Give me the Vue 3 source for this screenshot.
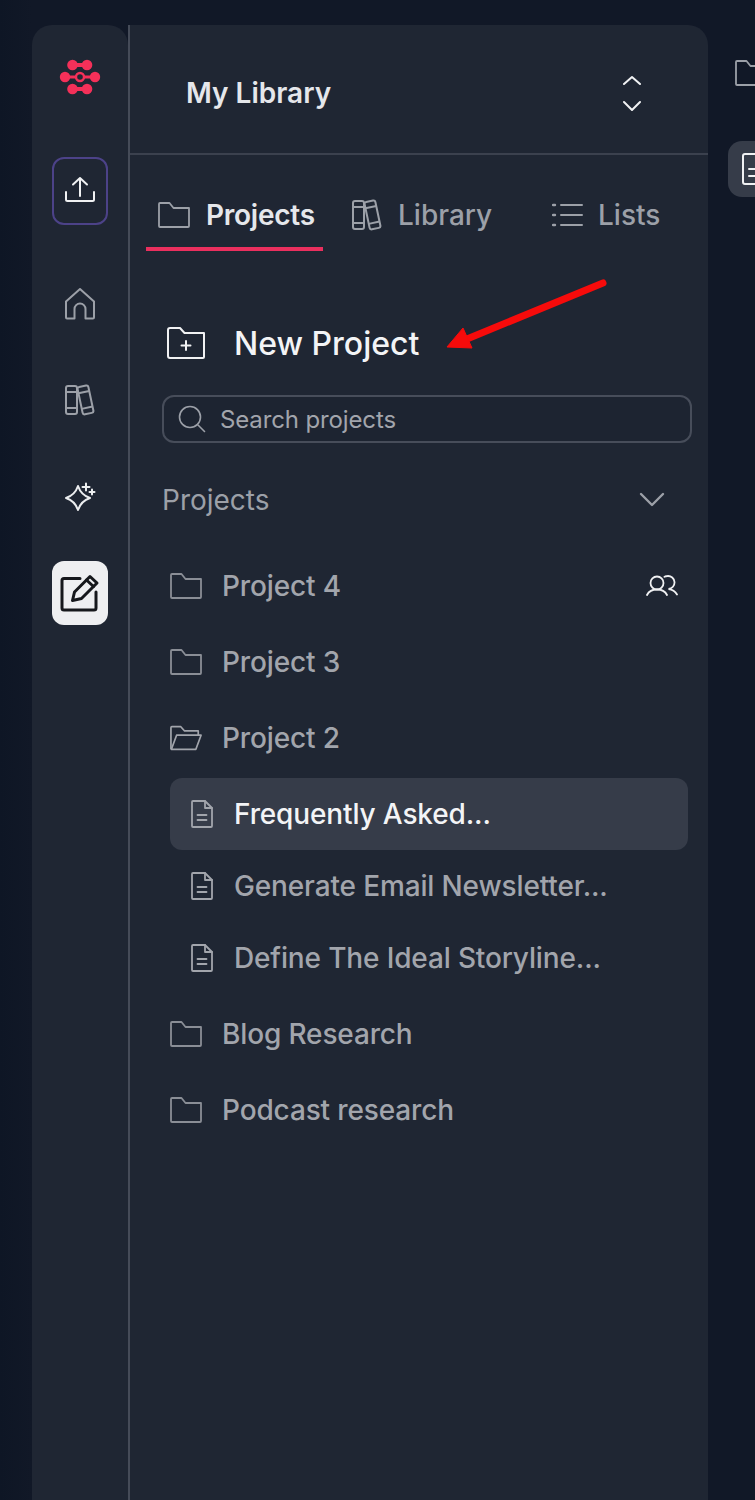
<template>
  <div class="page">
    <aside class="rail">
      <svg class="logo" width="42" height="36" viewBox="0 0 42 36">
        <g fill="#f43059">
          <circle cx="13.500" cy="6" r="5.300" /><circle cx="28" cy="6" r="5.300" />
          <path d="M13 4h15v4H13z" />
          <circle cx="6" cy="18" r="5.200" /><circle cx="36" cy="18" r="5.200" />
          <path d="M5 16.500h32v3H5z" />
          <circle cx="13.500" cy="30" r="5.300" /><circle cx="28" cy="30" r="5.300" />
          <path d="M13 28h15v4H13z" />
        </g>
        <circle cx="21" cy="18" r="4" fill="#1f2633" stroke="#f43059" stroke-width="2.400" />
      </svg>

      <button class="rail-btn upload">
        <svg width="32" height="32" viewBox="0 0 32 32" fill="none" stroke="#f0f1f3" stroke-width="2" stroke-linecap="round" stroke-linejoin="round">
          <path d="M16 21V3M9 9.500 16 3l7 6.500M2 17v7.500c0 1 .5 1.500 1.500 1.500h25c1 0 1.500-.5 1.500-1.500V17" />
        </svg>
      </button>

      <span class="rail-icon home">
        <svg width="32" height="32" viewBox="0 0 32 32" fill="none" stroke="#9ca0a8" stroke-width="2" stroke-linejoin="round">
          <path d="M2 13.500 16 1l14 12.500V29.500a1 1 0 0 1-1 1H21.500V21a5.500 5.500 0 0 0-11 0v9.500H3a1 1 0 0 1-1-1z" />
        </svg>
      </span>

      <span class="rail-icon books">
        <svg width="32" height="32" viewBox="0 0 32 32" fill="none" stroke="#9ca0a8" stroke-width="2" stroke-linejoin="round">
          <rect x="2" y="2" width="11" height="28" rx="2" />
          <path d="M2 8h11M2 24h11" />
          <g transform="rotate(-12 21 16)">
            <rect x="16" y="2" width="11" height="28" rx="2" />
            <path d="M16 8h11M16 24h11" />
          </g>
        </svg>
      </span>

      <span class="rail-icon sparkle">
        <svg width="32" height="32" viewBox="0 0 32 32" fill="none" stroke="#eceef0" stroke-width="2" stroke-linejoin="round" stroke-linecap="round">
          <path d="M14 6Q17 15 26 18 17 21 14 30 11 21 2 18 11 15 14 6z" />
          <path d="M22 3.500v7M18.500 7h7M28 9.500v5M25.500 12h5" />
        </svg>
      </span>

      <button class="rail-btn edit">
        <svg width="40" height="40" viewBox="0 0 40 40" fill="none" stroke="#16181c" stroke-width="3" stroke-linecap="round" stroke-linejoin="round">
          <path d="M20 5.500H4a2 2 0 0 0-2 2V35a2 2 0 0 0 2 2h30a2 2 0 0 0 2-2V19" />
          <path d="M12.500 27.500l2-8.500L30 3.500l7 6.500-15.500 15.500z" />
          <path d="M26.500 7l7 6.500" />
        </svg>
      </button>
    </aside>

    <main class="panel">
      <header class="panel-head">
        <span class="head-title">My Library</span>
        <svg class="updown" width="20" height="36" viewBox="0 0 20 36" fill="none" stroke="#f0f1f3" stroke-width="2" stroke-linecap="round" stroke-linejoin="round">
          <path d="M2 9l8-7 8 7M2 27l8 8 8-8" />
        </svg>
      </header>

      <nav class="tabs">
        <div class="tab active">
          <svg class="folder" width="32" height="26" viewBox="0 0 32 26" fill="none" stroke="#9ca0a8" stroke-width="1.800" stroke-linejoin="round">
            <path d="M1 2a1 1 0 0 1 1-1h9.500l4 5H31v18a1 1 0 0 1-1 1H2a1 1 0 0 1-1-1z" />
          </svg>
          <span>Projects</span>
        </div>
        <div class="tab library">
          <svg width="30" height="32" viewBox="0 0 30 32" fill="none" stroke="#9ca0a8" stroke-width="2" stroke-linejoin="round">
            <rect x="1" y="2" width="11" height="28" rx="2" />
            <path d="M1 8h11M1 24h11" />
            <g transform="rotate(-12 20 16)">
              <rect x="15" y="2" width="11" height="28" rx="2" />
              <path d="M15 8h11M15 24h11" />
            </g>
          </svg>
          <span>Library</span>
        </div>
        <div class="tab lists">
          <svg width="31" height="24" viewBox="0 0 31 24" fill="none" stroke="#9ca0a8" stroke-width="2" stroke-linecap="round">
            <path d="M9 2h21M9 12h21M9 22h21" />
            <path d="M1 2h2M1 12h2M1 22h2" stroke-width="2.400" />
          </svg>
          <span>Lists</span>
        </div>
      </nav>

      <div class="new-project">
        <svg width="38" height="32" viewBox="0 0 38 32" fill="none" stroke="#f0f1f3" stroke-width="2" stroke-linejoin="round" stroke-linecap="round">
          <path d="M1 3a2 2 0 0 1 2-2h10l4.500 5H37v24a1 1 0 0 1-1 1H3a2 2 0 0 1-2-2z" />
          <path d="M19 14v9M14.500 18.500h9" />
        </svg>
        <span>New Project</span>
      </div>

      <div class="search">
        <svg width="28" height="28" viewBox="0 0 28 28" fill="none" stroke="#9ca0a8" stroke-width="1.600" stroke-linecap="round">
          <circle cx="12" cy="12" r="10.500" />
          <path d="M20 20l6.500 6.500" />
        </svg>
        <span>Search projects</span>
      </div>

      <div class="section-head">
        <span>Projects</span>
        <svg width="26" height="16" viewBox="0 0 26 16" fill="none" stroke="#9ca0a8" stroke-width="2.400" stroke-linecap="round" stroke-linejoin="round">
          <path d="M2 2l11 11L24 2" />
        </svg>
      </div>

      <ul class="tree">
        <li v-for="item in items" :key="item.name">
          <div class="row">
            <svg v-if="!item.open" class="row-icon" width="32" height="26" viewBox="0 0 32 26" fill="none" stroke="#8a8e96" stroke-width="1.800" stroke-linejoin="round">
              <path d="M1 2a1 1 0 0 1 1-1h9.500l4 5H31v18a1 1 0 0 1-1 1H2a1 1 0 0 1-1-1z" />
            </svg>
            <svg v-else class="row-icon" width="34" height="26" viewBox="0 0 34 26" fill="none" stroke="#a2a5ac" stroke-width="1.800" stroke-linejoin="round">
              <path d="M1 25V2a1 1 0 0 1 1-1h9.500l4 4.500H30V10" />
              <path d="M1.500 25 7 10h26l-5.500 15z" />
            </svg>
            <span class="row-name">{{ item.name }}</span>
            <svg v-if="item.shared" class="shared" width="32" height="22" viewBox="0 0 32 22" fill="none" stroke="#f0f1f3" stroke-width="1.800" stroke-linecap="round">
              <circle cx="11" cy="8" r="6.500" />
              <path d="M1 20c2-4 5.500-5.500 10-5.500S19 16 21 20" />
              <path d="M18.500 1.800c1-.5 2-.8 3-.8a6.500 6.500 0 0 1 1 13c4 .5 6.500 2 8.500 5.500" />
            </svg>
          </div>
          <ul v-if="item.children" class="docs">
            <li v-for="child in item.children" :key="child.name" class="doc" :class="{ selected: child.selected }">
              <svg width="22" height="28" viewBox="0 0 22 28" fill="none" stroke="#a2a5ac" stroke-width="1.800" stroke-linejoin="round" stroke-linecap="round">
                <path d="M1 2a1 1 0 0 1 1-1h12l7 7v18a1 1 0 0 1-1 1H2a1 1 0 0 1-1-1z" />
                <path d="M14 1v7h7M6.500 15h9M6.500 20h9" />
              </svg>
              <span>{{ child.name }}</span>
            </li>
          </ul>
        </li>
      </ul>
    </main>

    <aside class="peek">
      <svg class="peek-folder" width="27" height="26" viewBox="0 0 27 26" fill="none" stroke="#9ca0a8" stroke-width="1.800" stroke-linejoin="round">
        <path d="M28 25H2a1 1 0 0 1-1-1V2a1 1 0 0 1 1-1h9.500l4 5H28" />
      </svg>
      <div class="peek-active">
        <svg width="22" height="32" viewBox="0 0 22 32" fill="none" stroke="#f0f1f3" stroke-width="2" stroke-linecap="round">
          <path d="M24 1H3a2 2 0 0 0-2 2v26a2 2 0 0 0 2 2h21" />
          <path d="M7 16h16M7 23h16" />
        </svg>
      </div>
    </aside>

    <svg class="arrow" width="170" height="80" viewBox="0 0 170 80">
      <path d="M158 4 22 60" stroke="#f60b0b" stroke-width="7" stroke-linecap="round" />
      <path d="M2 68 18 49 27 69z" fill="#f60b0b" stroke="#f60b0b" stroke-width="1" stroke-linejoin="round" />
    </svg>
  </div>
</template>

<script setup>
const items = [
  { name: 'Project 4', shared: true },
  { name: 'Project 3' },
  {
    name: 'Project 2',
    open: true,
    children: [
      { name: 'Frequently Asked...', selected: true },
      { name: 'Generate Email Newsletter...' },
      { name: 'Define The Ideal Storyline...' },
    ],
  },
  { name: 'Blog Research' },
  { name: 'Podcast research' },
]
</script>

<style>
html,
body {
  background: #111827;
}
</style>

<style scoped>
.page {
  position: relative;
  display: flex;
  width: 755px;
  height: 1500px;
  overflow: hidden;
  box-sizing: border-box;
  padding: 25px 0 0 32px;
  background: linear-gradient(90deg, #0e1625 0, #111827 32px);
  font-family: Inter, "Liberation Sans", sans-serif;
  color: #e5e7eb;
}

.rail {
  flex: none;
  display: flex;
  flex-direction: column;
  align-items: center;
  width: 96px;
  background: #1f2633;
  border-radius: 20px 20px 0 0;
}

.logo {
  margin-top: 34px;
}

.rail-btn {
  display: flex;
  align-items: center;
  justify-content: center;
  width: 56px;
  padding: 0;
  border-radius: 12px;
}

.upload {
  height: 68px;
  margin-top: 62px;
  background: transparent;
  border: 2px solid #4c4288;
}

.rail-icon {
  display: flex;
}

.home {
  margin-top: 63px;
}

.books {
  margin-top: 64px;
}

.sparkle {
  margin-top: 64px;
}

.edit {
  height: 64px;
  margin-top: 49px;
  background: #eeeff1;
  border: none;
}

.panel {
  flex: none;
  width: 578px;
  border-left: 2px solid #454b58;
  background: #1f2633;
  border-radius: 0 20px 0 0;
}

.panel-head {
  display: flex;
  align-items: center;
  justify-content: space-between;
  box-sizing: border-box;
  height: 130px;
  padding: 8px 66px 0 56px;
  border-bottom: 2px solid #3b414e;
  font-size: 28px;
  font-weight: 600;
}

.tabs {
  display: flex;
  height: 98px;
  font-size: 28px;
  font-weight: 500;
  color: #9ca0a8;
}

.tab {
  display: flex;
  align-items: center;
  gap: 16px;
  height: 96px;
  box-sizing: border-box;
  padding-top: 24px;
}

.tab.active {
  width: 177px;
  margin-left: 16px;
  padding: 28px 0 0 12px;
  color: #e5e7eb;
  font-weight: 600;
  letter-spacing: -0.25px;
  border-bottom: 4px solid #ea2f5e;
}

.tab.library {
  margin-left: 29px;
  width: 200px;
}

.tab.lists {
  gap: 15px;
}

.new-project {
  display: flex;
  align-items: center;
  gap: 29px;
  height: 64px;
  margin-top: 58px;
  padding-left: 37px;
  font-size: 32px;
  font-weight: 500;
  color: #f3f4f6;
}

.search {
  display: flex;
  align-items: center;
  gap: 14px;
  box-sizing: border-box;
  width: 530px;
  height: 48px;
  margin: 20px 0 0 32px;
  padding-left: 14px;
  border: 2px solid #474d5a;
  border-radius: 12px;
  background: #1d2431;
  font-size: 24px;
  letter-spacing: -0.13px;
  color: #a2a5ac;
}

.section-head {
  display: flex;
  align-items: center;
  justify-content: space-between;
  height: 56px;
  margin-top: 29px;
  padding: 0 43px 0 32px;
  font-size: 28px;
  color: #9ca0a8;
}

.tree,
.docs {
  list-style: none;
  margin: 0;
  padding: 0;
}

.tree {
  margin-top: 20px;
}

.docs {
  margin: 2px 0;
}

.row {
  display: flex;
  align-items: center;
  gap: 20px;
  height: 76px;
  padding-left: 40px;
  font-size: 28px;
  font-weight: 500;
  letter-spacing: -0.14px;
  color: #a2a5ac;
}

.row-icon {
  width: 32px;
  flex: none;
}

.row-name {
  flex: 1;
}

.shared {
  margin-right: 30px;
}

.doc {
  display: flex;
  align-items: center;
  gap: 21px;
  box-sizing: border-box;
  width: 518px;
  height: 72px;
  margin-left: 40px;
  padding-left: 21px;
  border-radius: 12px;
  font-size: 28px;
  font-weight: 500;
  letter-spacing: -0.14px;
  color: #a2a5ac;
}

.doc.selected {
  background: #363c49;
  color: #f3f4f6;
}

.peek {
  flex: none;
  width: 47px;
  padding-left: 20px;
}

.peek-folder {
  display: block;
  margin: 35px 0 0 7px;
}

.peek-active {
  display: flex;
  align-items: center;
  box-sizing: border-box;
  width: 40px;
  height: 56px;
  margin-top: 55px;
  padding-left: 14px;
  border-radius: 14px 0 0 14px;
  background: #363c49;
}

.arrow {
  position: absolute;
  left: 445px;
  top: 279px;
}
</style>
